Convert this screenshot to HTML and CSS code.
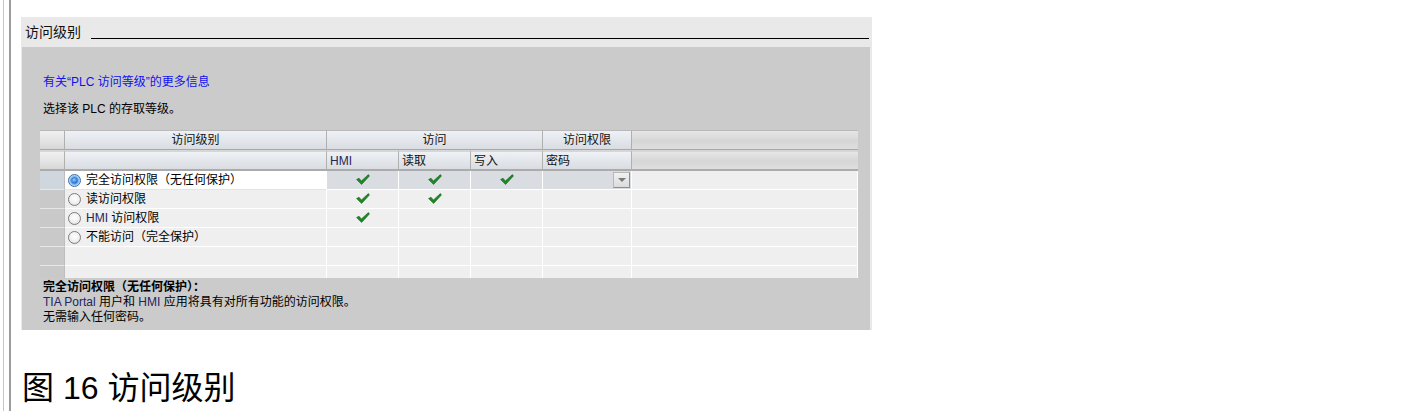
FILE: index.html
```html
<!DOCTYPE html>
<html lang="zh-CN">
<head>
<meta charset="utf-8">
<title>访问级别</title>
<link rel="stylesheet" href="styles.css">
</head>
<body>
<div class="page">
  <div class="rail"></div>
  <div class="main">
    <section class="panel">
      <div class="panel-head">
        <span class="panel-title">访问级别</span>
        <span class="panel-rule"></span>
      </div>
      <div class="panel-body">
        <a class="info-link" href="#">有关“PLC 访问等级”的更多信息</a>
        <p class="hint">选择该 PLC 的存取等级。</p>

        <div class="grid">
          <div class="hc rh"></div>
          <div class="hc">访问级别</div>
          <div class="hc span3">访问</div>
          <div class="hc">访问权限</div>
          <div class="hc fill"></div>

          <div class="hc rh row2"></div>
          <div class="hc row2"></div>
          <div class="hc row2 left hmi">HMI</div>
          <div class="hc row2 left">读取</div>
          <div class="hc row2 left">写入</div>
          <div class="hc row2 left">密码</div>
          <div class="hc row2 fill"></div>

          <div class="dc rh sel"></div>
          <div class="dc name edit"><span class="radio on"></span>完全访问权限（无任何保护）</div>
          <div class="dc sel"><svg class="chk" viewBox="0 0 14 11"><path d="M0.6 5.6 L3 4.2 L5.4 7 L12.4 0.6 L13.4 2 L5.6 10.4 Z"/></svg></div>
          <div class="dc sel"><svg class="chk" viewBox="0 0 14 11"><path d="M0.6 5.6 L3 4.2 L5.4 7 L12.4 0.6 L13.4 2 L5.6 10.4 Z"/></svg></div>
          <div class="dc sel"><svg class="chk" viewBox="0 0 14 11"><path d="M0.6 5.6 L3 4.2 L5.4 7 L12.4 0.6 L13.4 2 L5.6 10.4 Z"/></svg></div>
          <div class="dc sel pw"><span class="dd"><span class="tri"></span></span></div>
          <div class="dc"></div>

          <div class="dc rh"></div>
          <div class="dc name"><span class="radio"></span>读访问权限</div>
          <div class="dc"><svg class="chk" viewBox="0 0 14 11"><path d="M0.6 5.6 L3 4.2 L5.4 7 L12.4 0.6 L13.4 2 L5.6 10.4 Z"/></svg></div>
          <div class="dc"><svg class="chk" viewBox="0 0 14 11"><path d="M0.6 5.6 L3 4.2 L5.4 7 L12.4 0.6 L13.4 2 L5.6 10.4 Z"/></svg></div>
          <div class="dc"></div>
          <div class="dc"></div>
          <div class="dc"></div>

          <div class="dc rh"></div>
          <div class="dc name"><span class="radio"></span><span class="lat">HMI</span>&nbsp;访问权限</div>
          <div class="dc"><svg class="chk" viewBox="0 0 14 11"><path d="M0.6 5.6 L3 4.2 L5.4 7 L12.4 0.6 L13.4 2 L5.6 10.4 Z"/></svg></div>
          <div class="dc"></div>
          <div class="dc"></div>
          <div class="dc"></div>
          <div class="dc"></div>

          <div class="dc rh"></div>
          <div class="dc name"><span class="radio"></span>不能访问（完全保护）</div>
          <div class="dc"></div>
          <div class="dc"></div>
          <div class="dc"></div>
          <div class="dc"></div>
          <div class="dc"></div>

          <div class="dc rh"></div>
          <div class="dc"></div>
          <div class="dc"></div>
          <div class="dc"></div>
          <div class="dc"></div>
          <div class="dc"></div>
          <div class="dc"></div>

          <div class="dc rh"></div>
          <div class="dc"></div>
          <div class="dc"></div>
          <div class="dc"></div>
          <div class="dc"></div>
          <div class="dc"></div>
          <div class="dc"></div>
        </div>

        <div class="desc">
          <p class="desc-title">完全访问权限（无任何保护）：</p>
          <p><span class="lat">TIA Portal</span> 用户和 <span class="lat">HMI</span> 应用将具有对所有功能的访问权限。</p>
          <p>无需输入任何密码。</p>
        </div>
      </div>
    </section>
    <h1 class="caption">图 16 访问级别</h1>
  </div>
</div>
</body>
</html>
```

FILE: styles.css
```css
html, body {
  margin: 0;
  padding: 0;
  background: #ffffff;
}

body {
  font-family: "Liberation Sans", "Noto Sans CJK SC", sans-serif;
  color: #000;
}

.page {
  display: flex;
  align-items: stretch;
  height: 411px;
}

.rail {
  margin-left: 3px;
  width: 5px;
  border-left: 1px solid #c6c6c6;
  border-right: 2px solid #9c9c9c;
  flex: none;
}

.main {
  padding-left: 10px;
  padding-top: 17px;
}

.panel {
  width: 851px;
  background: #e9e9e9;
}

.panel-head {
  display: flex;
  align-items: center;
  height: 30px;
  padding-left: 4px;
  padding-right: 3px;
}

.panel-title {
  font-size: 14px;
  line-height: 16px;
  color: #111;
}

.panel-rule {
  flex: 1;
  height: 1px;
  background: #000;
  margin-left: 10px;
  margin-top: 12px;
}

.panel-body {
  margin-left: 1px;
  width: 848px;
  background: #cbcbcb;
  padding: 28px 0 5px 0;
  font-size: 12px;
}

.info-link {
  display: block;
  margin-left: 21px;
  line-height: 14px;
  color: #1010f0;
  text-decoration: none;
}

.hint {
  margin: 13px 0 0 21px;
  line-height: 14px;
}

.grid {
  margin: 14px 0 0 18px;
  width: 818px;
  height: 148px;
  overflow: hidden;
  display: grid;
  grid-template-columns: 25px 262px 72px 72px 72px 89px 1fr;
  grid-auto-rows: 19px;
  grid-template-rows: 20px 21px;
  align-content: start;
  background: #d0d0d0;
}

.hc {
  box-sizing: border-box;
  border-top: 1px solid #b9b9b9;
  border-bottom: 1px solid #a8a8a8;
  border-right: 1px solid #b0b0b0;
  background: linear-gradient(#eef1f5, #e2e5ea 55%, #d9dce1);
  display: flex;
  align-items: center;
  justify-content: center;
  line-height: 14px;
  color: #111;
  font-size: 12px;
}

.hc.row2 {
  border-top: 2px solid #d6d6d6;
  border-bottom: 2px solid #ababab;
}

.hc.rh {
  background: linear-gradient(#f0f0f0, #e4e4e4 55%, #d7d7d7);
}

.hc.fill {
  background: linear-gradient(#e6e6e6, #d6d6d6 55%, #dedede);
  border-right: none;
}

.hc.span3 {
  grid-column: span 3;
}

.hc.left {
  justify-content: flex-start;
  padding-left: 3px;
}

.hc.hmi {
  color: #26265a;
}

.dc {
  box-sizing: border-box;
  background: #efefef;
  border-right: 1px solid #ffffff;
  border-bottom: 1px solid #ffffff;
  display: flex;
  align-items: center;
  justify-content: center;
  line-height: 14px;
  font-size: 12px;
}

.dc.rh {
  background: #c9c9c9;
  border-right: 1px solid #bdbdbd;
  border-bottom: 1px solid #e6e6e6;
}

.dc.rh.sel {
  background: #cfd6de;
}

.dc.sel {
  background: #d9dde2;
}

.dc.name {
  justify-content: flex-start;
  padding-left: 3px;
}

.dc.edit {
  background: #ffffff;
  border-bottom: 1px solid #dfe5ec;
}

.dc.pw {
  justify-content: flex-end;
  align-items: stretch;
  padding: 1px 1px 1px 0;
}

.dd {
  width: 17px;
  box-sizing: border-box;
  border: 1px solid #8e8e8e;
  border-top-color: #b8b8b8;
  border-left-color: #b8b8b8;
  background: linear-gradient(#f1f1f1, #dcdcdc);
  display: flex;
  align-items: center;
  justify-content: center;
}

.tri {
  width: 0;
  height: 0;
  border-left: 4px solid transparent;
  border-right: 4px solid transparent;
  border-top: 4px solid #7a7a7a;
}

.radio {
  width: 13px;
  height: 13px;
  box-sizing: border-box;
  border-radius: 50%;
  border: 1px solid #7d7d7d;
  background: radial-gradient(circle at 50% 40%, #ffffff 0%, #f2f2f2 50%, #d4d4d4 100%);
  margin-right: 5px;
  flex: none;
  position: relative;
}

.radio.on {
  border-color: #3a6ea8;
  background: radial-gradient(circle at 50% 50%, #1b62c6 0%, #2a7fe0 35%, #a8cdf3 60%, #e8f1fb 100%);
}

.radio.on::after {
  content: "";
  position: absolute;
  left: 3px;
  top: 3px;
  width: 5px;
  height: 5px;
  border-radius: 50%;
  background: radial-gradient(circle at 40% 35%, #8fd0ff, #0b55c0);
}

.chk {
  width: 14px;
  height: 11px;
  margin-top: -1px;
}

.chk path {
  fill: #1d8a26;
  stroke: #0f5e16;
  stroke-width: 0.6;
  stroke-linejoin: round;
}

.lat {
  color: #24245e;
}

.desc {
  margin: 2px 0 0 21px;
}

.desc p {
  margin: 0;
  line-height: 15px;
}

.desc .desc-title {
  font-weight: bold;
}

.caption {
  margin: 38px 0 0 1px;
  font-size: 32px;
  line-height: 40px;
  font-weight: normal;
  color: #000;
}
```
